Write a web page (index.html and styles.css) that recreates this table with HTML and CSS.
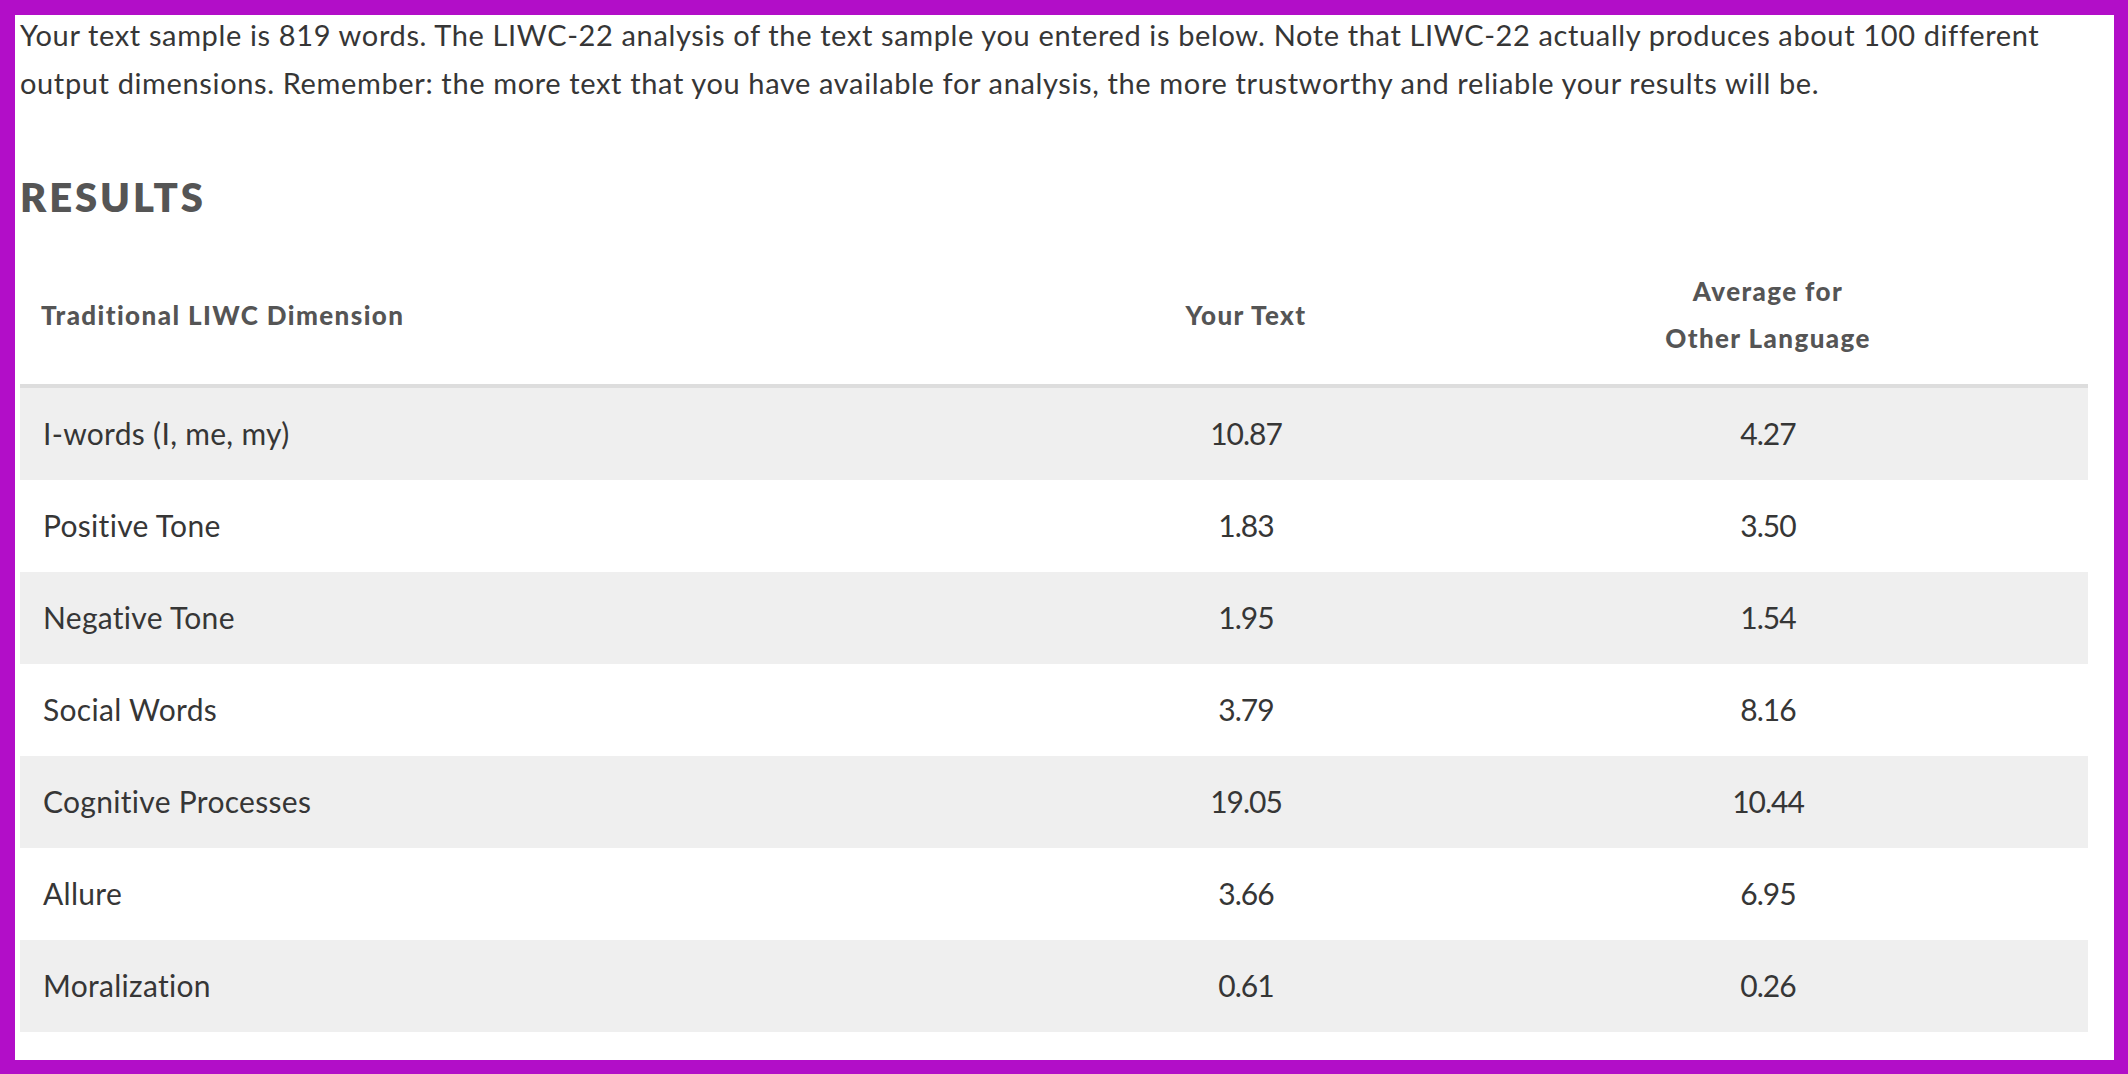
FILE: index.html
```html
<!DOCTYPE html>
<html lang="en">
<head>
<meta charset="utf-8">
<title>LIWC-22 Results</title>
<link rel="stylesheet" href="styles.css">
</head>
<body>
<div class="frame">
  <div class="content">
    <p class="intro">Your text sample is 819 words. The LIWC-22 analysis of the text sample you entered is below. Note that LIWC-22 actually produces about 100 different output dimensions. Remember: the more text that you have available for analysis, the more trustworthy and reliable your results will be.</p>
    <h2 class="results-title">RESULTS</h2>
    <table class="results">
      <colgroup>
        <col class="col-dim">
        <col class="col-yours">
        <col class="col-avg">
      </colgroup>
      <thead>
        <tr>
          <th class="th-dim">Traditional LIWC Dimension</th>
          <th>Your Text</th>
          <th>Average for<br>Other Language</th>
        </tr>
      </thead>
      <tbody>
        <tr><td class="td-dim">I-words (I, me, my)</td><td>10.87</td><td>4.27</td></tr>
        <tr><td class="td-dim">Positive Tone</td><td>1.83</td><td>3.50</td></tr>
        <tr><td class="td-dim">Negative Tone</td><td>1.95</td><td>1.54</td></tr>
        <tr><td class="td-dim">Social Words</td><td>3.79</td><td>8.16</td></tr>
        <tr><td class="td-dim">Cognitive Processes</td><td>19.05</td><td>10.44</td></tr>
        <tr><td class="td-dim">Allure</td><td>3.66</td><td>6.95</td></tr>
        <tr><td class="td-dim">Moralization</td><td>0.61</td><td>0.26</td></tr>
      </tbody>
    </table>
  </div>
</div>
</body>
</html>
```

FILE: styles.css
```css
html, body {
  margin: 0;
  padding: 0;
}

body {
  font-family: Lato, "Open Sans", "Liberation Sans", sans-serif;
  color: #333333;
  background: #b20ec8;
}

.frame {
  box-sizing: border-box;
  width: 2128px;
  height: 1074px;
  border: 15px solid #b20ec8;
  border-right-width: 14px;
  border-bottom-width: 14px;
  background: #ffffff;
  overflow: hidden;
}

.content {
  padding: 0 26px 0 5px;
}

.intro {
  margin: -4px 0 0;
  font-size: 29px;
  line-height: 47.5px;
  font-weight: 400;
  letter-spacing: 0.63px;
  color: #363636;
}

.results-title {
  margin: 67px 0 25px;
  font-size: 40px;
  line-height: 48px;
  font-weight: 800;
  color: #555555;
  letter-spacing: 2.9px;
}

.results {
  width: 2068px;
  border-collapse: collapse;
  table-layout: fixed;
}

.col-dim { width: 1024px; }
.col-yours { width: 404px; }
.col-avg { width: 640px; }

.results th {
  font-size: 26px;
  line-height: 47px;
  font-weight: 900;
  color: #555555;
  text-align: center;
  padding: 22px 22px;
  border-bottom: 4px solid #dddddd;
  letter-spacing: 1.4px;
}

.results th.th-dim {
  text-align: left;
  padding-left: 21px;
}

.results td {
  font-size: 30px;
  line-height: 47px;
  font-weight: 400;
  text-align: center;
  padding: 22px 22px 23px;
  color: #363636;
  letter-spacing: -1px;
}

.results td.td-dim {
  text-align: left;
  padding-left: 23px;
  letter-spacing: 0.3px;
}

.results tbody tr:nth-child(odd) td {
  background: #efefef;
}
```
